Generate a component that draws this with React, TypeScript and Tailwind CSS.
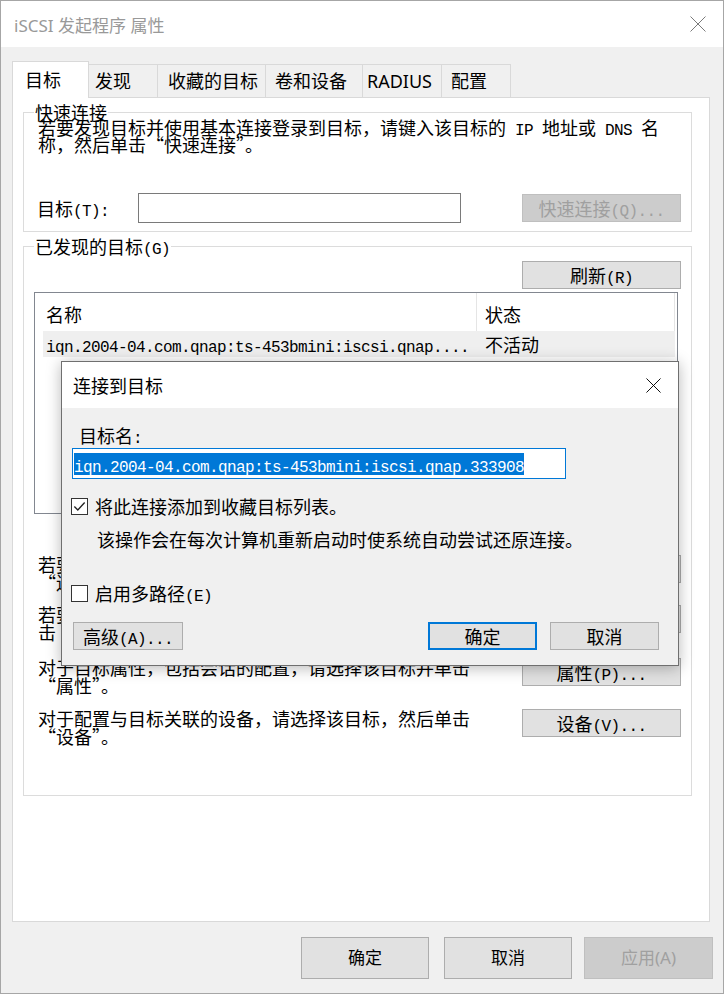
import React from "react";

// SimSun-like mixed run: CJK in Noto Sans CJK, ASCII in a half-width mono
function Sim({ text }: { text: string }) {
  const parts = text.split(/([\x20-\x7e]+)/).filter(Boolean);
  return (
    <>
      {parts.map((p, i) =>
        /^[\x20-\x7e]+$/.test(p) ? (
          <span
            key={i}
            className="font-['Liberation_Mono',monospace] text-[16px] tracking-[-0.6px] leading-[6px] whitespace-pre"
          >
            {p}
          </span>
        ) : (
          <span key={i}>{p}</span>
        )
      )}
    </>
  );
}

function CloseX({ className }: { className: string }) {
  return (
    <svg viewBox="0 0 16 16" className={className} fill="none" stroke="currentColor" strokeWidth="1">
      <path d="M0.5 0.5 L15.5 15.5 M15.5 0.5 L0.5 15.5" />
    </svg>
  );
}

function Btn({
  label,
  w = "w-[159px]",
  disabled = false,
  primary = false,
}: {
  label: string;
  w?: string;
  disabled?: boolean;
  primary?: boolean;
}) {
  return (
    <div
      className={`${w} h-[28px] shrink-0 flex items-center justify-center leading-[18px] ${
        disabled
          ? "bg-[#cccccc] border border-[#bfbfbf] text-[#a0a0a0]"
          : primary
          ? "bg-[#e1e1e1] border-2 border-[#0078d7]"
          : "bg-[#e1e1e1] border border-[#adadad]"
      }`}
    >
      <span>
        <Sim text={label} />
      </span>
    </div>
  );
}

function CheckBox({ checked }: { checked: boolean }) {
  return (
    <div className="w-[17px] h-[17px] border border-[#333333] bg-white shrink-0 flex items-center justify-center">
      {checked && (
        <svg viewBox="0 0 16 16" className="w-[15px] h-[15px]" fill="none" stroke="#222" strokeWidth="1.4">
          <path d="M2.5 8 L6.2 11.8 L13.5 3.8" />
        </svg>
      )}
    </div>
  );
}

const tabs = [
  { label: "目标", w: "w-[77px]", pl: "pl-[12px]", active: true },
  { label: "发现", w: "w-[70px]", pl: "pl-[6px]" },
  { label: "收藏的目标", w: "w-[109px]", pl: "pl-[10px]" },
  { label: "卷和设备", w: "w-[98px]", pl: "pl-[9px]" },
  { label: "RADIUS", w: "w-[80px]", pl: "pl-[4px]" },
  { label: "配置", w: "w-[70px]", pl: "pl-[9px]" },
];

const actions = [
  { lines: ["若要使用高级选项进行连接，请选择目标，然后单击", "“连接”。"], btn: "连接(N)", mt: "mt-[41px]" },
  { lines: ["若要完全断开某个目标的连接，请选择该目标，然后单", "击“断开连接”。"], btn: "断开连接(D)", mt: "mt-[14px]" },
  { lines: ["对于目标属性，包括会话的配置，请选择该目标并单击", "“属性”。"], btn: "属性(P)...", mt: "mt-[17px]" },
  { lines: ["对于配置与目标关联的设备，请选择该目标，然后单击", "“设备”。"], btn: "设备(V)...", mt: "mt-[15px]" },
];

export default function App() {
  return (
    <div className="relative w-[724px] h-[994px] overflow-hidden bg-[#f0f0f0] border border-[#a6a6a6] flex flex-col text-black text-[18px] font-['Noto_Sans_CJK_SC',sans-serif]">
      {/* title bar */}
      <div className="h-[46px] shrink-0 bg-white flex items-center justify-between pl-[13px] pr-[17px]">
        <span className="pt-[3px] text-[17px] text-[#999999] font-['Noto_Sans','Noto_Sans_CJK_SC',sans-serif]">
          iSCSI 发起程序 属性
        </span>
        <CloseX className="w-[16px] h-[16px] text-[#7a7a7a]" />
      </div>

      {/* tabs */}
      <div className="relative z-10 flex items-end pl-[11px] mt-[14px] h-[37px] font-['Noto_Sans','Noto_Sans_CJK_SC',sans-serif]">
        {tabs.map((t, i) => (
          <div
            key={t.label}
            className={`${t.w} ${t.pl} ${i > 0 ? "-ml-px" : ""} flex items-center border-l border-t border-r border-[#d9d9d9] ${
              t.active ? "relative z-10 h-full bg-white" : "h-[33px] mb-px bg-[#f0f0f0]"
            }`}
          >
            {t.label}
          </div>
        ))}
      </div>

      {/* tab page */}
      <div className="ml-[11px] -mt-px w-[698px] h-[825px] shrink-0 bg-white border border-[#d9d9d9] pl-[10px] pt-[5px]">
        {/* quick connect */}
        <fieldset className="w-[669px] border border-[#dcdcdc] pb-[8px]">
          <legend className="ml-[10px] px-px leading-[18px]">快速连接</legend>
          <div className="pl-[14px] -mt-[2px] leading-[17px]">
            <Sim text="若要发现目标并使用基本连接登录到目标，请键入该目标的 IP 地址或 DNS 名" />
            <br />
            <Sim text="称，然后单击“快速连接”。" />
          </div>
          <div className="mt-[40px] flex items-center pl-[13px] pr-[10px]">
            <div className="w-[101px] leading-[18px]">
              <Sim text="目标(T):" />
            </div>
            <div className="w-[323px] h-[30px] bg-white border border-[#7a7a7a]" />
            <div className="ml-auto">
              <Btn label="快速连接(Q)..." disabled />
            </div>
          </div>
        </fieldset>

        {/* discovered targets */}
        <fieldset className="mt-[5px] w-[669px] h-[559px] border border-[#dcdcdc]">
          <legend className="ml-[10px] px-px leading-[18px]">
            <Sim text="已发现的目标(G)" />
          </legend>
          <div className="mt-[6px] flex justify-end pr-[10px]">
            <Btn label="刷新(R)" />
          </div>
          <div className="mt-[3px] ml-[10px] w-[644px] h-[222px] border border-[#828790] bg-white">
            <div className="h-[38px] flex leading-[18px]">
              <div className="w-[442px] border-r border-[#e5e5e5] pl-[11px] pt-[4px] flex items-center">名称</div>
              <div className="w-[198px] border-r border-[#e5e5e5] pl-[8px] pt-[4px] flex items-center">状态</div>
            </div>
            <div className="ml-[8px] mr-[2px] h-[26px] bg-[#efefef] flex items-center leading-[18px]">
              <div className="w-[434px] pl-[3px]">
                <Sim text="iqn.2004-04.com.qnap:ts-453bmini:iscsi.qnap...." />
              </div>
              <div className="pl-[8px]">不活动</div>
            </div>
          </div>

          {actions.map((a) => (
            <div key={a.btn} className={`${a.mt} flex items-start justify-between pl-[14px] pr-[10px]`}>
              <div className="leading-[18px]">
                <Sim text={a.lines[0]} />
                <br />
                <Sim text={a.lines[1]} />
              </div>
              <Btn label={a.btn} />
            </div>
          ))}
        </fieldset>
      </div>

      {/* bottom buttons */}
      <div className="mt-[15px] flex justify-end pr-[10px] text-[17px] font-['Noto_Sans','Noto_Sans_CJK_SC',sans-serif]">
        <div className="w-[128px] h-[42px] flex items-center justify-center bg-[#e1e1e1] border border-[#adadad]">确定</div>
        <div className="ml-[15px] w-[128px] h-[42px] flex items-center justify-center bg-[#e1e1e1] border border-[#adadad]">取消</div>
        <div className="ml-[12px] w-[129px] h-[42px] flex items-center justify-center bg-[#cccccc] border border-[#bfbfbf] text-[#a0a0a0]">应用(A)</div>
      </div>

      {/* modal dialog */}
      <div className="absolute left-[60px] top-[360px] z-20 w-[618px] h-[305px] flex flex-col border border-[#6f6f6f] shadow-[0_2px_14px_rgba(0,0,0,0.28)]">
        <div className="h-[46px] shrink-0 bg-white flex items-center justify-between pl-[11px] pr-[17px]">
          <span>连接到目标</span>
          <CloseX className="w-[15px] h-[15px] text-black" />
        </div>
        <div className="flex-1 bg-[#f0f0f0] pt-[18px]">
          <div className="pl-[17px] leading-[18px]">
            <Sim text="目标名:" />
          </div>
          <div className="mt-[4px] ml-[10px] w-[494px] h-[31px] bg-white border border-[#0078d7] flex items-center pl-px">
            <span className="bg-[#0078d7] text-white leading-[22px] inline-block h-[22px]">
              <Sim text="iqn.2004-04.com.qnap:ts-453bmini:iscsi.qnap.333908" />
            </span>
          </div>
          <div className="mt-[18px] ml-[9px] flex items-center gap-[7px] leading-[18px]">
            <CheckBox checked />
            <span>将此连接添加到收藏目标列表。</span>
          </div>
          <div className="mt-[15px] pl-[35px] leading-[18px]">该操作会在每次计算机重新启动时使系统自动尝试还原连接。</div>
          <div className="mt-[36px] ml-[9px] flex items-center gap-[7px] leading-[18px]">
            <CheckBox checked={false} />
            <span>
              <Sim text="启用多路径(E)" />
            </span>
          </div>
          <div className="mt-[20px] flex items-center pl-[11px] pr-[19px]">
            <Btn label="高级(A)..." w="w-[110px]" />
            <div className="ml-auto">
              <Btn label="确定" w="w-[109px]" primary />
            </div>
            <div className="ml-[13px]">
              <Btn label="取消" w="w-[109px]" />
            </div>
          </div>
        </div>
      </div>
    </div>
  );
}
